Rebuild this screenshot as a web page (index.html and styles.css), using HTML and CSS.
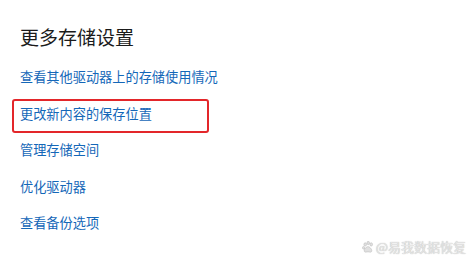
FILE: index.html
```html
<!DOCTYPE html>
<html lang="zh-CN">
<head>
    <meta charset="UTF-8">
    <title>更多存储设置</title>
    <link rel="stylesheet" href="styles.css">
</head>
<body>

<div class="panel">
    <h2 class="title">更多存储设置</h2>
    <ul class="links">
        <li class="link-item"><a href="#">查看其他驱动器上的存储使用情况</a></li>
        <li class="link-item marked"><a href="#">更改新内容的保存位置</a></li>
        <li class="link-item"><a href="#">管理存储空间</a></li>
        <li class="link-item"><a href="#">优化驱动器</a></li>
        <li class="link-item"><a href="#">查看备份选项</a></li>
    </ul>
</div>

<div class="watermark">
    <svg class="paw" width="12" height="12" viewBox="0 0 12 12">
        <ellipse cx="3.2" cy="3.4" rx="1.3" ry="1.7" />
        <ellipse cx="6.2" cy="2" rx="1.3" ry="1.7" />
        <ellipse cx="9.2" cy="3.4" rx="1.3" ry="1.7" />
        <ellipse cx="1.6" cy="6.8" rx="1.1" ry="1.4" />
        <path d="M6 5.6 C8 5.6 10.6 9 9.6 10.6 C8.8 11.6 7.4 10.9 6 10.9 C4.6 10.9 3.2 11.6 2.4 10.6 C1.4 9 4 5.6 6 5.6 Z" />
    </svg>
    <span>@易我数据恢复</span>
</div>

</body>
</html>
```

FILE: styles.css
```css
body {
    margin: 0;
    background: #fff;
    font-family: "Noto Sans CJK SC", "Noto Sans", sans-serif;
}
.panel {
    padding: 25px 0 0 20px;
}
.title {
    margin: 0 0 13px 0;
    font-size: 19px;
    line-height: 24px;
    font-weight: normal;
    color: #1b1b1b;
}
.links {
    list-style-type: none;
    margin: 0 0 0 -8px;
    padding: 0;
}
.link-item {
    box-sizing: border-box;
    width: 197px;
    padding: 3px 6px 7px 6px;
    margin-bottom: 2.5px;
    border: 2px solid transparent;
    border-radius: 3px;
    font-size: 13.2px;
    line-height: 20px;
    white-space: nowrap;
}
.link-item a {
    color: #1467b8;
    text-decoration: none;
}
.link-item.marked {
    border-color: #e3262a;
}
.watermark {
    position: absolute;
    right: 8px;
    bottom: 11px;
    display: flex;
    align-items: center;
    gap: 2px;
    font-size: 13px;
    line-height: 16px;
    color: #e6e6e6;
    text-shadow: 0 0 1px #a8a8a8;
}
.paw {
    fill: #e0e0e0;
    stroke: #aaa;
    stroke-width: 0.4;
}
```
